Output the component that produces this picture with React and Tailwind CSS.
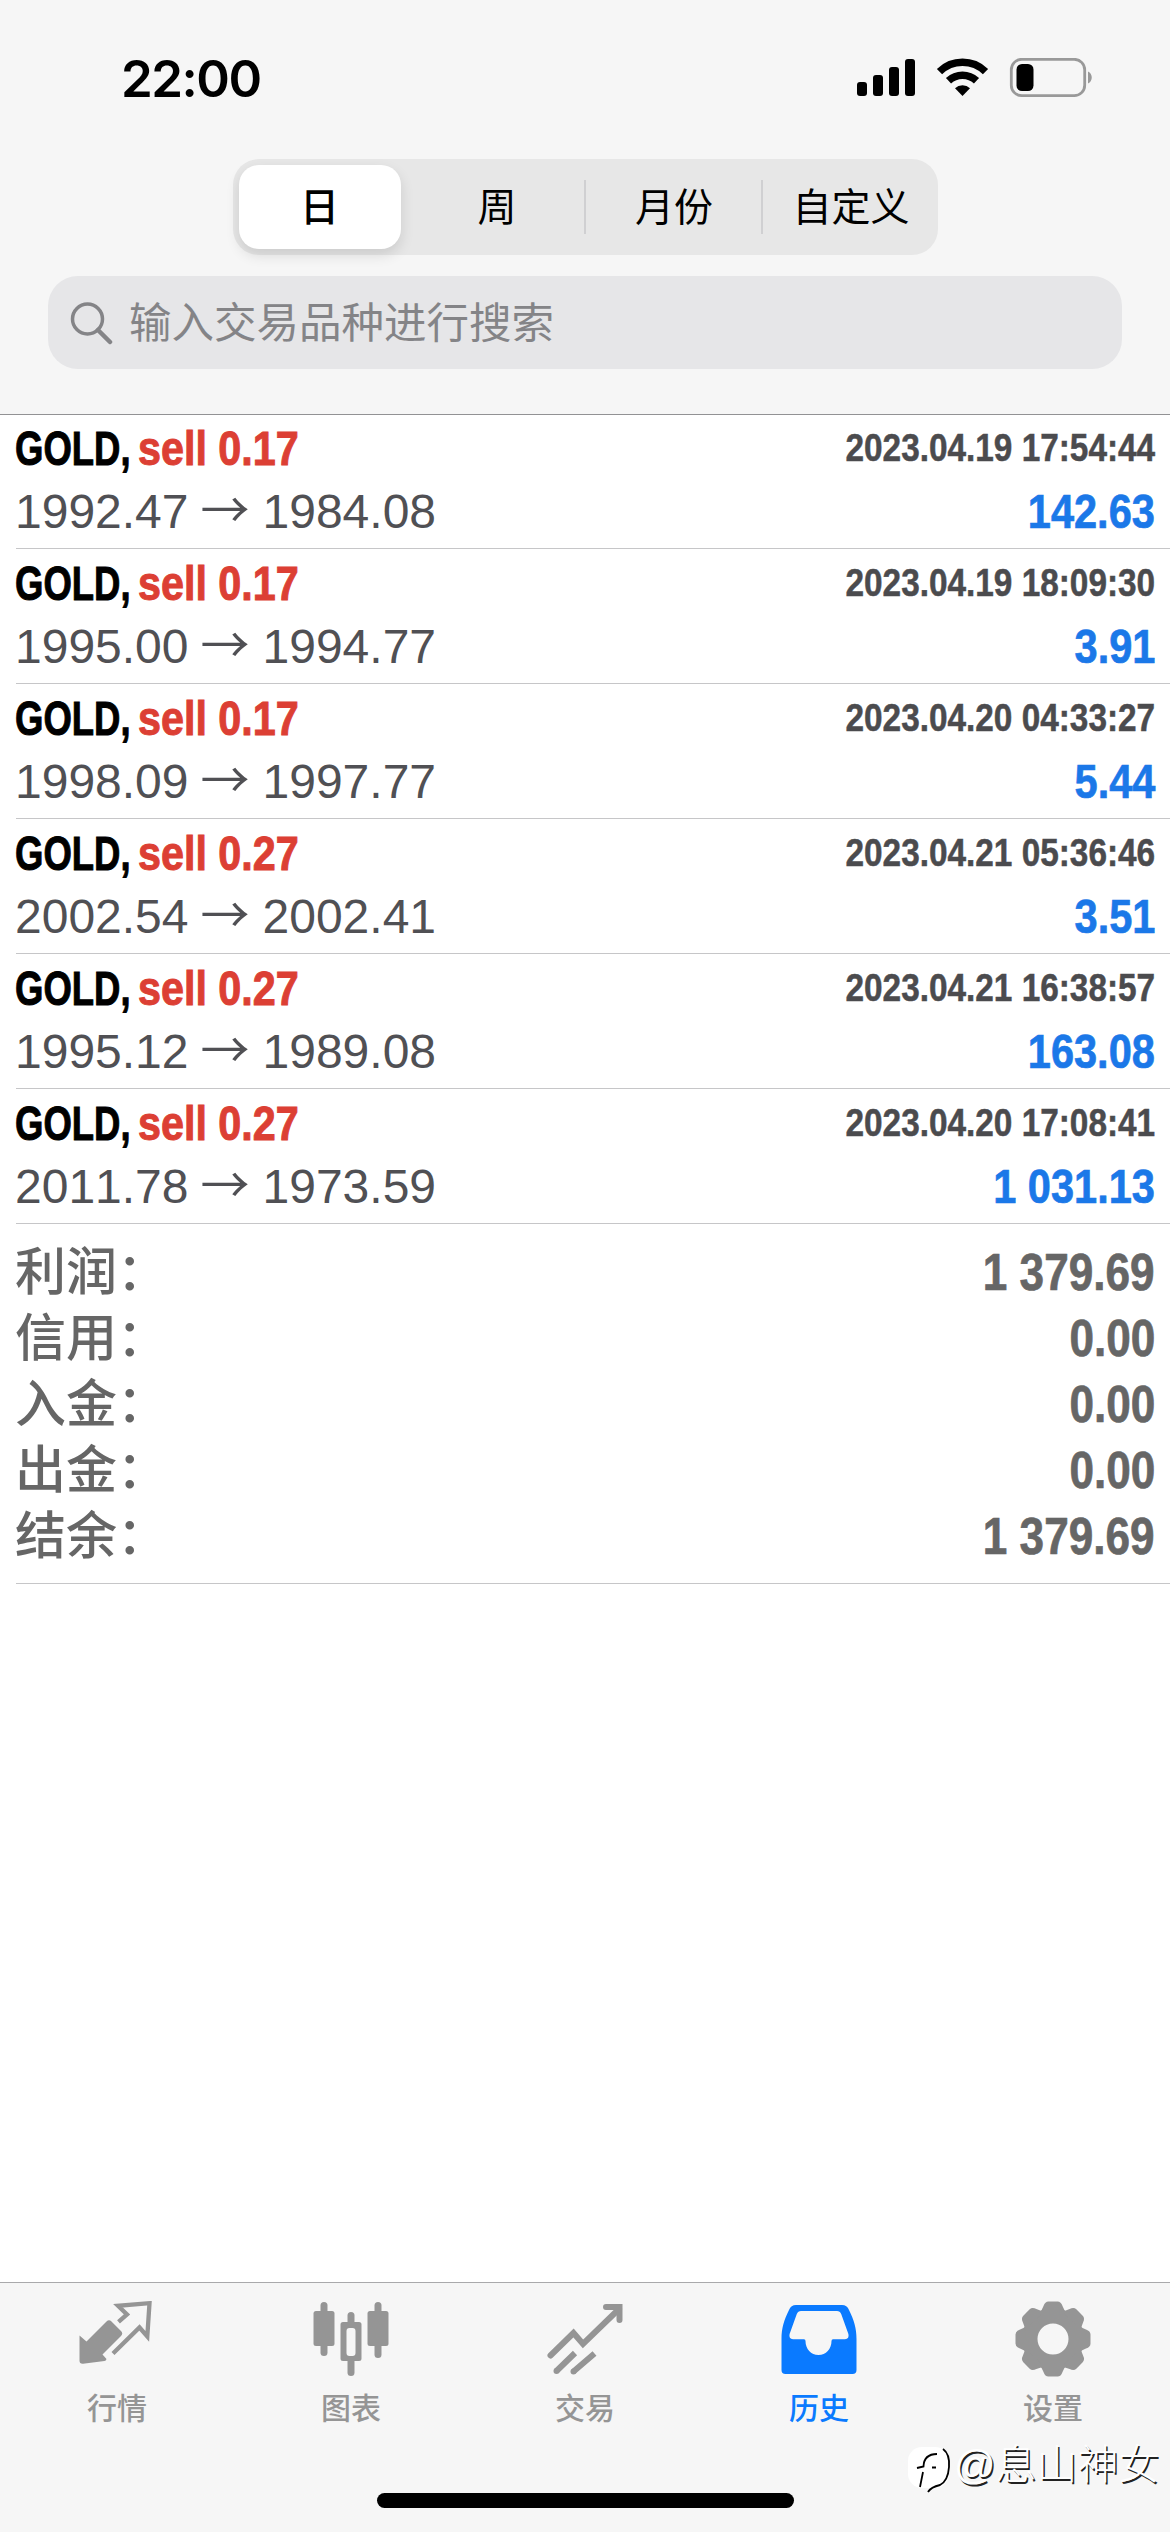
import React, { useState } from 'react';

const deals = [
    { symbol: 'GOLD', side: 'sell 0.17', time: '2023.04.19 17:54:44', open: '1992.47', close: '1984.08', profit: '142.63' },
    { symbol: 'GOLD', side: 'sell 0.17', time: '2023.04.19 18:09:30', open: '1995.00', close: '1994.77', profit: '3.91' },
    { symbol: 'GOLD', side: 'sell 0.17', time: '2023.04.20 04:33:27', open: '1998.09', close: '1997.77', profit: '5.44' },
    { symbol: 'GOLD', side: 'sell 0.27', time: '2023.04.21 05:36:46', open: '2002.54', close: '2002.41', profit: '3.51' },
    { symbol: 'GOLD', side: 'sell 0.27', time: '2023.04.21 16:38:57', open: '1995.12', close: '1989.08', profit: '163.08' },
    { symbol: 'GOLD', side: 'sell 0.27', time: '2023.04.20 17:08:41', open: '2011.78', close: '1973.59', profit: '1 031.13' },
];

const summary = [
    { label: '利润：', value: '1 379.69' },
    { label: '信用：', value: '0.00' },
    { label: '入金：', value: '0.00' },
    { label: '出金：', value: '0.00' },
    { label: '结余：', value: '1 379.69' },
];

const periods = ['日', '周', '月份', '自定义'];

const StatusIcons = () => (
    <svg width="236" height="40" viewBox="0 0 236 40">
        <rect x="0" y="24" width="10" height="14" rx="3" />
        <rect x="16" y="17" width="10" height="21" rx="3" />
        <rect x="32" y="9" width="10" height="29" rx="3" />
        <rect x="48" y="1" width="10" height="37" rx="3" />
        <g fill="none" stroke="#000" strokeWidth="7.5">
            <path d="M82.5 13.6A33 33 0 0 1 128.500 13.600" />
            <path d="M91.500 22.700A20.500 20.500 0 0 1 119.500 22.700" />
        </g>
        <path d="M105.500 38l-7.500-7.800a11 11 0 0 1 15 0z" />
        <rect x="154.300" y="1.300" width="73.400" height="36.400" rx="10.500" fill="none" stroke="#999" strokeWidth="2.800" />
        <rect x="159.500" y="6" width="17" height="27" rx="5.500" />
        <path d="M231 13.500c5 2 5 10 0 12z" fill="#999" />
    </svg>
);

const QuotesIcon = () => (
    <svg width="76" height="76" viewBox="0 0 76 76" fill="currentColor">
        <path d="M0.500 34.500L7.500 40.500L27.500 20.500Q30 18 32.500 20.500L42 30Q44.500 32.500 42 35L23.500 53.500L27.500 58Q27 60 25.500 60L4 62.800Q0.500 63 0.500 59.500z" />
        <path d="M39.500 20.800L48 13.500L39 4.800L70.500 2.200L68.300 35.500L60.500 26.500L34 52.500" fill="none" stroke="currentColor" strokeWidth="4.300" />
    </svg>
);

const ChartIcon = () => (
    <svg width="76" height="76" viewBox="0 0 76 76" fill="currentColor">
        <rect x="7.500" y="1" width="7" height="54" rx="3.500" />
        <rect x="0.500" y="10" width="21" height="35" rx="2.500" />
        <rect x="61.500" y="1" width="7" height="56" rx="3.500" />
        <rect x="54.500" y="10" width="21" height="35" rx="2.500" />
        <rect x="34.500" y="11" width="7" height="14" rx="3.500" />
        <rect x="34.500" y="57" width="7" height="18" rx="3.500" />
        <path fillRule="evenodd" d="M30 21h16q2.500 0 2.500 2.500v34q0 2.500-2.500 2.500h-16q-2.500 0-2.500-2.500v-34q0-2.500 2.500-2.500zM36.500 27q-3 0-3 3v22q0 3 3 3h3q3 0 3-3v-22q0-3-3-3z" />
    </svg>
);

const TradeIcon = () => (
    <svg width="76" height="76" viewBox="0 0 76 76" fill="none" stroke="currentColor" strokeWidth="6">
        <path d="M3.500 54.500L26.500 32L36 43L72 8" strokeLinecap="round" />
        <path d="M59 6H72.500V19" strokeLinecap="round" />
        <path d="M28 52L9.500 70M47.500 52.500L26.500 70.500" />
        <circle cx="9.500" cy="70" r="3" fill="currentColor" stroke="none" />
        <circle cx="26.500" cy="70.500" r="3" fill="currentColor" stroke="none" />
    </svg>
);

const HistoryIcon = () => (
    <svg width="76" height="76" viewBox="0 0 76 76" fill="currentColor">
        <path
            fillRule="evenodd"
            d="M15 4H61Q66 4 68 9C73 19 75.500 27 75.500 38V69Q75.500 73 71.500 73H4.500Q0.500 73 0.500 69V38C0.500 27 3 19 8 9Q10 4 15 4zM20 10Q17 10 15.800 13L8.600 33Q7.500 38 12 38.300H23Q24.500 38.300 24.500 40C24.500 48 30 54 37.500 54S50.500 48 50.500 40Q50.500 38.300 52 38.300H64Q68.500 38 67.400 33L60.200 13Q59 10 56 10z"
        />
    </svg>
);

const SettingsIcon = () => (
    <svg width="76" height="76" viewBox="-38 -38 76 76" fill="currentColor">
        <circle r="23" fill="none" stroke="currentColor" strokeWidth="15" />
        {[0, 45, 90, 135, 180, 225, 270, 315].map(angle => (
            <path
                key={angle}
                transform={`rotate(${angle})`}
                d="M-13.500 -26Q-11 -29 -9.500 -33Q-8 -37.500 -4.500 -37.500H4.500Q8 -37.500 9.500 -33Q11 -29 13.500 -26z"
            />
        ))}
    </svg>
);

const tabs = [
    { name: '行情', icon: QuotesIcon },
    { name: '图表', icon: ChartIcon },
    { name: '交易', icon: TradeIcon },
    { name: '历史', icon: HistoryIcon },
    { name: '设置', icon: SettingsIcon },
];

// bold labels and figures are condensed with scale-x
const DealRow = ({ deal }) => (
    <li className="ml-4 h-[135px] border-b border-[#c6c6c8] pr-[15px] pt-[3px]">
        <div className="flex h-[63px] items-center justify-between whitespace-nowrap font-bold">
            <p className="-ml-px flex text-[48px] [-webkit-text-stroke:1px]">
                <span className="w-[123px] origin-left scale-x-[0.76] text-black">{deal.symbol},</span>
                <span className="origin-left scale-x-[0.86] text-[#dc3f34]">{deal.side}</span>
            </p>
            <time className="origin-right scale-x-[0.855] text-[39px] text-[#4b4b4e] [-webkit-text-stroke:0.5px]">{deal.time}</time>
        </div>
        <div className="flex h-[63px] items-center justify-between whitespace-nowrap">
            <p className="-ml-px flex items-center text-[48px] text-[#505054]">
                {deal.open}
                <span className="mb-2.5 ml-3 mr-[15px] w-[47px] text-center font-['Noto_Sans_CJK_SC',sans-serif] text-[49px] leading-none">→</span>
                {deal.close}
            </p>
            <p className="origin-right scale-x-[0.865] text-[48px] font-bold text-[#1b78e8] [-webkit-text-stroke:0.7px]">{deal.profit}</p>
        </div>
    </li>
);

const App = () => {
    const [period, setPeriod] = useState('日');
    const [activeTab, setActiveTab] = useState('历史');

    return (
        <div className="relative flex h-[2532px] w-[1170px] flex-col overflow-hidden bg-white font-['Liberation_Sans','Noto_Sans_CJK_SC',sans-serif] [font-kerning:none]">
            <header className="h-[415px] border-b border-[#929294] bg-[#f6f6f6]">
                <div className="flex h-[159px] items-center justify-between pb-[3px] pl-[121px] pr-[77px]">
                    <span className="font-['Inter',sans-serif] text-[51px] font-semibold leading-none tracking-[-1.5px]">22:00</span>
                    <StatusIcons />
                </div>

                <div className="mx-auto flex h-24 w-[705px] items-center rounded-[26px] bg-[#e7e7e7] py-1.5 pl-1.5">
                    {periods.map((name, i) => (
                        <React.Fragment key={name}>
                            {i > 1 && <span className="h-[54px] w-0.5 bg-[#d0d0d2]" />}
                            <button
                                onClick={() => setPeriod(name)}
                                className={
                                    period === name
                                        ? 'mr-2 h-[84px] w-[162px] rounded-[20px] bg-white pt-0.5 text-[39px] font-medium shadow-[0_6px_14px_rgba(0,0,0,0.12)]'
                                        : 'h-[84px] flex-1 pl-0.5 pt-0.5 text-[39px]'
                                }
                            >
                                {name}
                            </button>
                        </React.Fragment>
                    ))}
                </div>

                <div className="mx-12 mt-[21px] flex h-[93px] items-center rounded-[30px] bg-[#e6e6e8] pl-[22px] text-[#848487]">
                    <svg width="44" height="44" viewBox="0 0 44 44" fill="none" stroke="currentColor" strokeWidth="3.500">
                        <circle cx="17.500" cy="18" r="15" />
                        <path d="M28 29L40 41" strokeWidth="4.500" strokeLinecap="round" />
                    </svg>
                    <span className="ml-[15px] pt-0.5 text-[42.5px]">输入交易品种进行搜索</span>
                </div>
            </header>

            <main className="flex-1">
                <ul className="-mt-px">
                    {deals.map(deal => (
                        <DealRow key={deal.time} deal={deal} />
                    ))}
                </ul>
                <dl className="ml-4 h-[360px] border-b border-[#c6c6c8] pr-[15px] pt-4 text-[#666]">
                    {summary.map(row => (
                        <div key={row.label} className="flex h-[66px] items-center justify-between">
                            <dt className="-ml-px text-[51px] font-medium">{row.label}</dt>
                            <dd className="origin-right scale-x-[0.865] text-[51px] font-bold [-webkit-text-stroke:0.7px]">{row.value}</dd>
                        </div>
                    ))}
                </dl>
            </main>

            <nav className="h-[250px] border-t border-[#a9a9ab] bg-[#f6f6f6]">
                <div className="flex">
                    {tabs.map(({ name, icon: Icon }) => (
                        <button
                            key={name}
                            onClick={() => setActiveTab(name)}
                            className={`flex w-[234px] flex-col items-center pt-[18px] ${activeTab === name ? 'text-[#0a7aff]' : 'text-[#959595]'}`}
                        >
                            <Icon />
                            <span className="mt-[9px] text-[30px] font-medium leading-[46px]">{name}</span>
                        </button>
                    ))}
                </div>
                <div className="mx-auto mt-[61px] h-[15px] w-[417px] rounded-full bg-black" />
            </nav>

            {/* author watermark */}
            <div className="absolute left-[908px] top-[2437px] flex items-center text-white [text-shadow:1.5px_1.5px_0.5px_#222]">
                <svg width="46" height="56" viewBox="0 0 46 56" fill="none">
                    <rect x="0" y="10" width="41" height="41" rx="14" fill="#fff" />
                    <path d="M9 31L15.500 29.500Q16 17 29 17M15 35L12 50M24 30.500H28" stroke="#000" strokeWidth="1.800" />
                    <path d="M35 12Q42 17 41 30Q40 44 32 48Q23 50 20 55" stroke="#000" strokeWidth="1.800" />
                </svg>
                <span className="text-[41px] font-light leading-[56px]">@息山神女</span>
            </div>
        </div>
    );
};

export default App;
